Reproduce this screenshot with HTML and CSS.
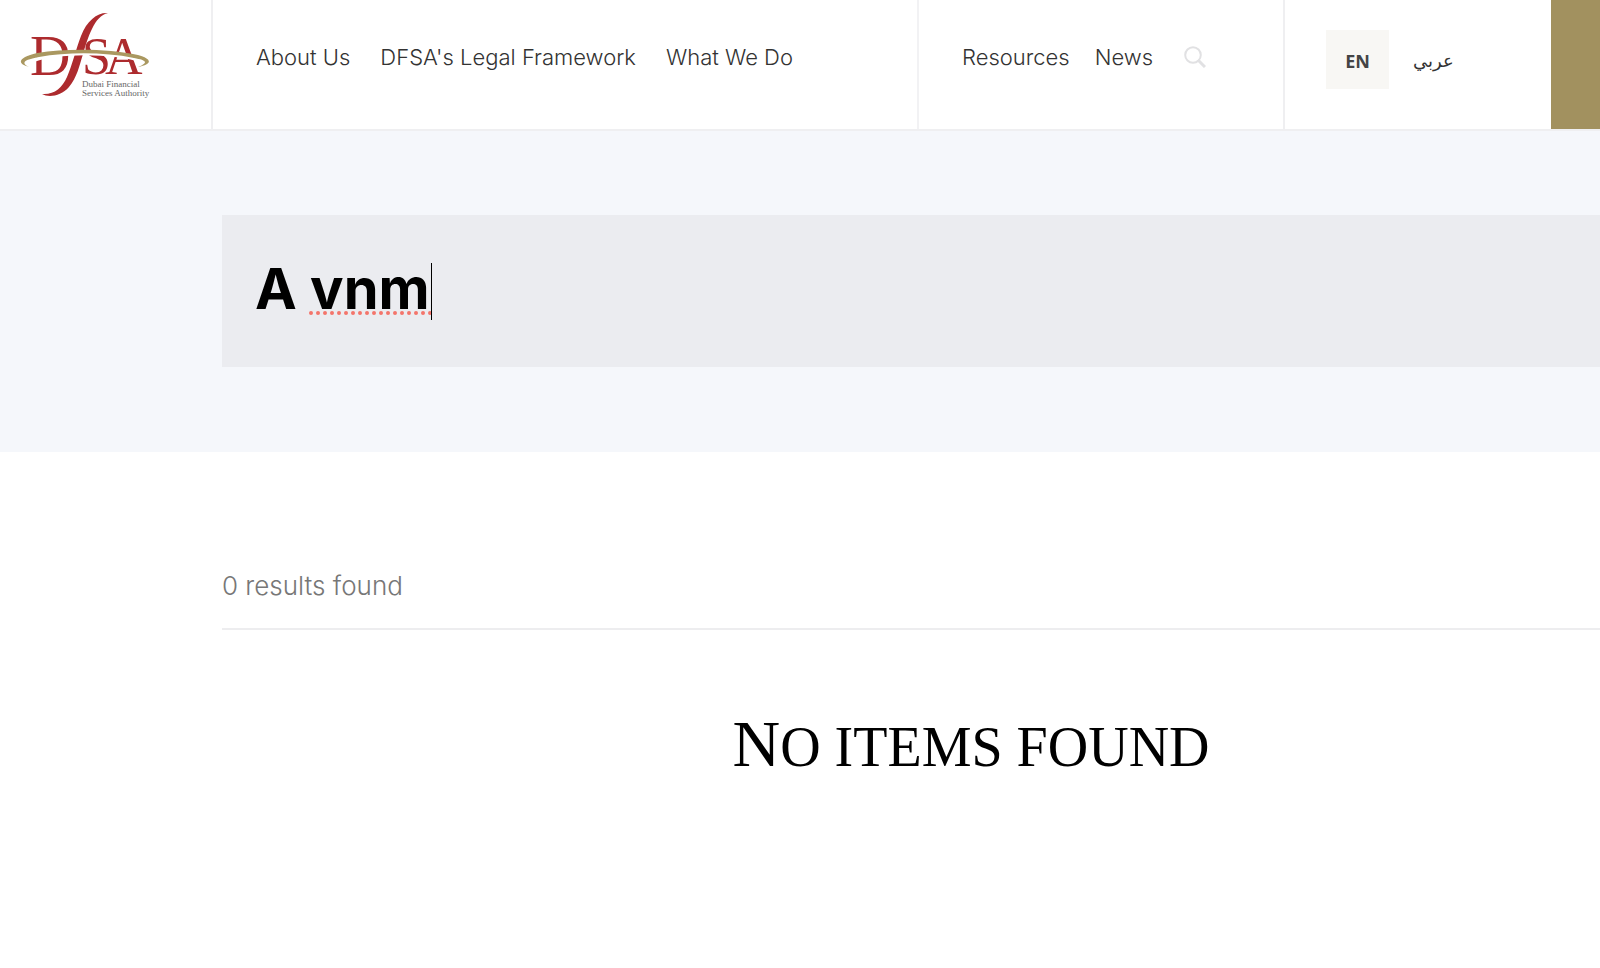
FILE: index.html
```html
<!DOCTYPE html>
<html lang="en">
<head>
<meta charset="utf-8">
<title>Search | Dubai Financial Services Authority</title>
<link rel="stylesheet" href="styles.css">
</head>
<body>
<header class="header">
  <a class="logo" href="#" aria-label="Dubai Financial Services Authority">
    <svg class="logo-image" viewBox="0 0 152 110" width="152" height="110">
      <g class="logo-letters">
        <text x="30" y="75" font-size="56">D</text>
        <text x="82" y="74" font-size="52">S</text>
        <text x="105" y="74" font-size="52">A</text>
      </g>
      <path class="logo-f" d="M108 13C98 12 87 20 81 36C76 49 72 66 67 77C62 88 54 95 42 94C49 98 61 96 69 87C77 77 79 67 83 54C88 38 94 16 108 13Z"/>
      <path class="logo-gap" d="M34 60C58 51 110 51 141 60"/>
      <path class="logo-arc" d="M29 67C15 63 20 57 37 53C69 48 109 49 138 55C152 59 153 64 138 67C150 62 145 60 134 58C104 52 68 52 39 57C23 60 21 63 29 67Z"/>
      <text class="logo-caption" x="82" y="87">Dubai Financial</text>
      <text class="logo-caption" x="82" y="96">Services Authority</text>
    </svg>
  </a>
  <nav class="nav nav-main" aria-label="Main">
    <a href="#">About Us</a>
    <a href="#">DFSA's Legal Framework</a>
    <a href="#">What We Do</a>
  </nav>
  <nav class="nav nav-side" aria-label="Secondary">
    <a href="#">Resources</a>
    <a href="#">News</a>
    <button class="search-button" type="button" aria-label="Search">
      <svg viewBox="0 0 22 22" width="22" height="22"><circle cx="9" cy="9" r="7.8"/><path d="M14 14l7 7" stroke-width="3"/></svg>
    </button>
  </nav>
  <div class="languages">
    <a class="language language-active" href="#">EN</a>
    <a class="language language-arabic" href="#" lang="ar">عربي</a>
  </div>
  <div class="accent"></div>
</header>
<section class="hero">
  <div class="search-box">
    <input class="search-input" type="text" value="A vnm" aria-label="Search" spellcheck="false">
    <svg class="spelling" width="124" height="4"><path d="M2 2H122"/></svg>
    <span class="caret"></span>
  </div>
</section>
<main class="results">
  <p class="count">0 results found</p>
  <h1 class="empty">No items found</h1>
</main>
</body>
</html>
```
FILE: styles.css
```css
* { box-sizing: border-box; }
body {
  margin: 0;
  background: #fff;
  color: #333;
  font-family: Inter, "Liberation Sans", sans-serif;
}
a { color: inherit; text-decoration: none; }
.header {
  display: flex;
  height: 131px;
  border-bottom: 2px solid #efeff1;
}
.logo { width: 213px; border-right: 2px solid #efeff1; }
.logo-image { display: block; }
.logo-letters {
  font-family: "Liberation Serif", serif;
  fill: #ad2b2e;
}
.logo-f { fill: #ad2b2e; }
.logo-gap { fill: none; stroke: #fff; stroke-width: 4; }
.logo-arc { fill: #aa9860; }
.logo-caption {
  font-family: "Liberation Serif", serif;
  font-size: 9px;
  fill: #666;
}
.nav {
  display: flex;
  align-items: flex-start;
  padding: 41px 0 0 43px;
  font-size: 22px;
  line-height: 32px;
  font-weight: 300;
  white-space: nowrap;
}
.nav-main { flex: 1; gap: 30px; border-right: 2px solid #f2f2f4; }
.nav-side { width: 366px; gap: 25px; border-right: 2px solid #efeff1; }
.search-button {
  display: flex;
  align-items: center;
  height: 32px;
  margin-left: 6px;
  padding: 0;
  border: 0;
  background: none;
}
.search-button svg { fill: none; stroke: #e1e1e3; stroke-width: 2; }
.languages {
  display: flex;
  gap: 24px;
  width: 266px;
  padding: 30px 0 0 41px;
}
.language { height: 59px; line-height: 62px; font-size: 18px; }
.language-active {
  width: 63px;
  background: #f8f7f4;
  color: #444;
  font-family: "Noto Sans", sans-serif;
  font-weight: 700;
  text-align: center;
}
.language-arabic { font-family: "DejaVu Sans", sans-serif; font-weight: 300; }
.accent { width: 49px; background: #a2915f; }
.hero {
  padding: 84px 0 85px 222px;
  background: #f5f7fb;
}
.search-box {
  position: relative;
  background: #ebecf0;
}
.search-input {
  display: block;
  width: 100%;
  padding: 40px 33px 44px;
  border: 0;
  outline: 0;
  background: transparent;
  color: #000;
  font: 700 56px/68px Inter, "Liberation Sans", sans-serif;
}
.spelling { position: absolute; left: 87px; top: 96px; }
.spelling path {
  fill: none;
  stroke: #f4756b;
  stroke-width: 4;
  stroke-linecap: round;
  stroke-dasharray: 0 7;
}
.caret {
  position: absolute;
  left: 209px;
  top: 48px;
  width: 1px;
  height: 57px;
  background: #000;
}
.results { padding: 114px 0 0 222px; }
.count {
  margin: 0;
  padding-bottom: 22px;
  border-bottom: 2px solid #ededef;
  color: #777;
  font-size: 26px;
  line-height: 40px;
  font-weight: 300;
}
.empty {
  margin: 78px 0 0;
  padding-left: 120px;
  color: #000;
  font-family: "Liberation Serif", serif;
  font-size: 56px;
  line-height: 72px;
  font-weight: 400;
  text-align: center;
  text-transform: uppercase;
}
.empty::first-letter { font-size: 66px; line-height: 72px; }
```
